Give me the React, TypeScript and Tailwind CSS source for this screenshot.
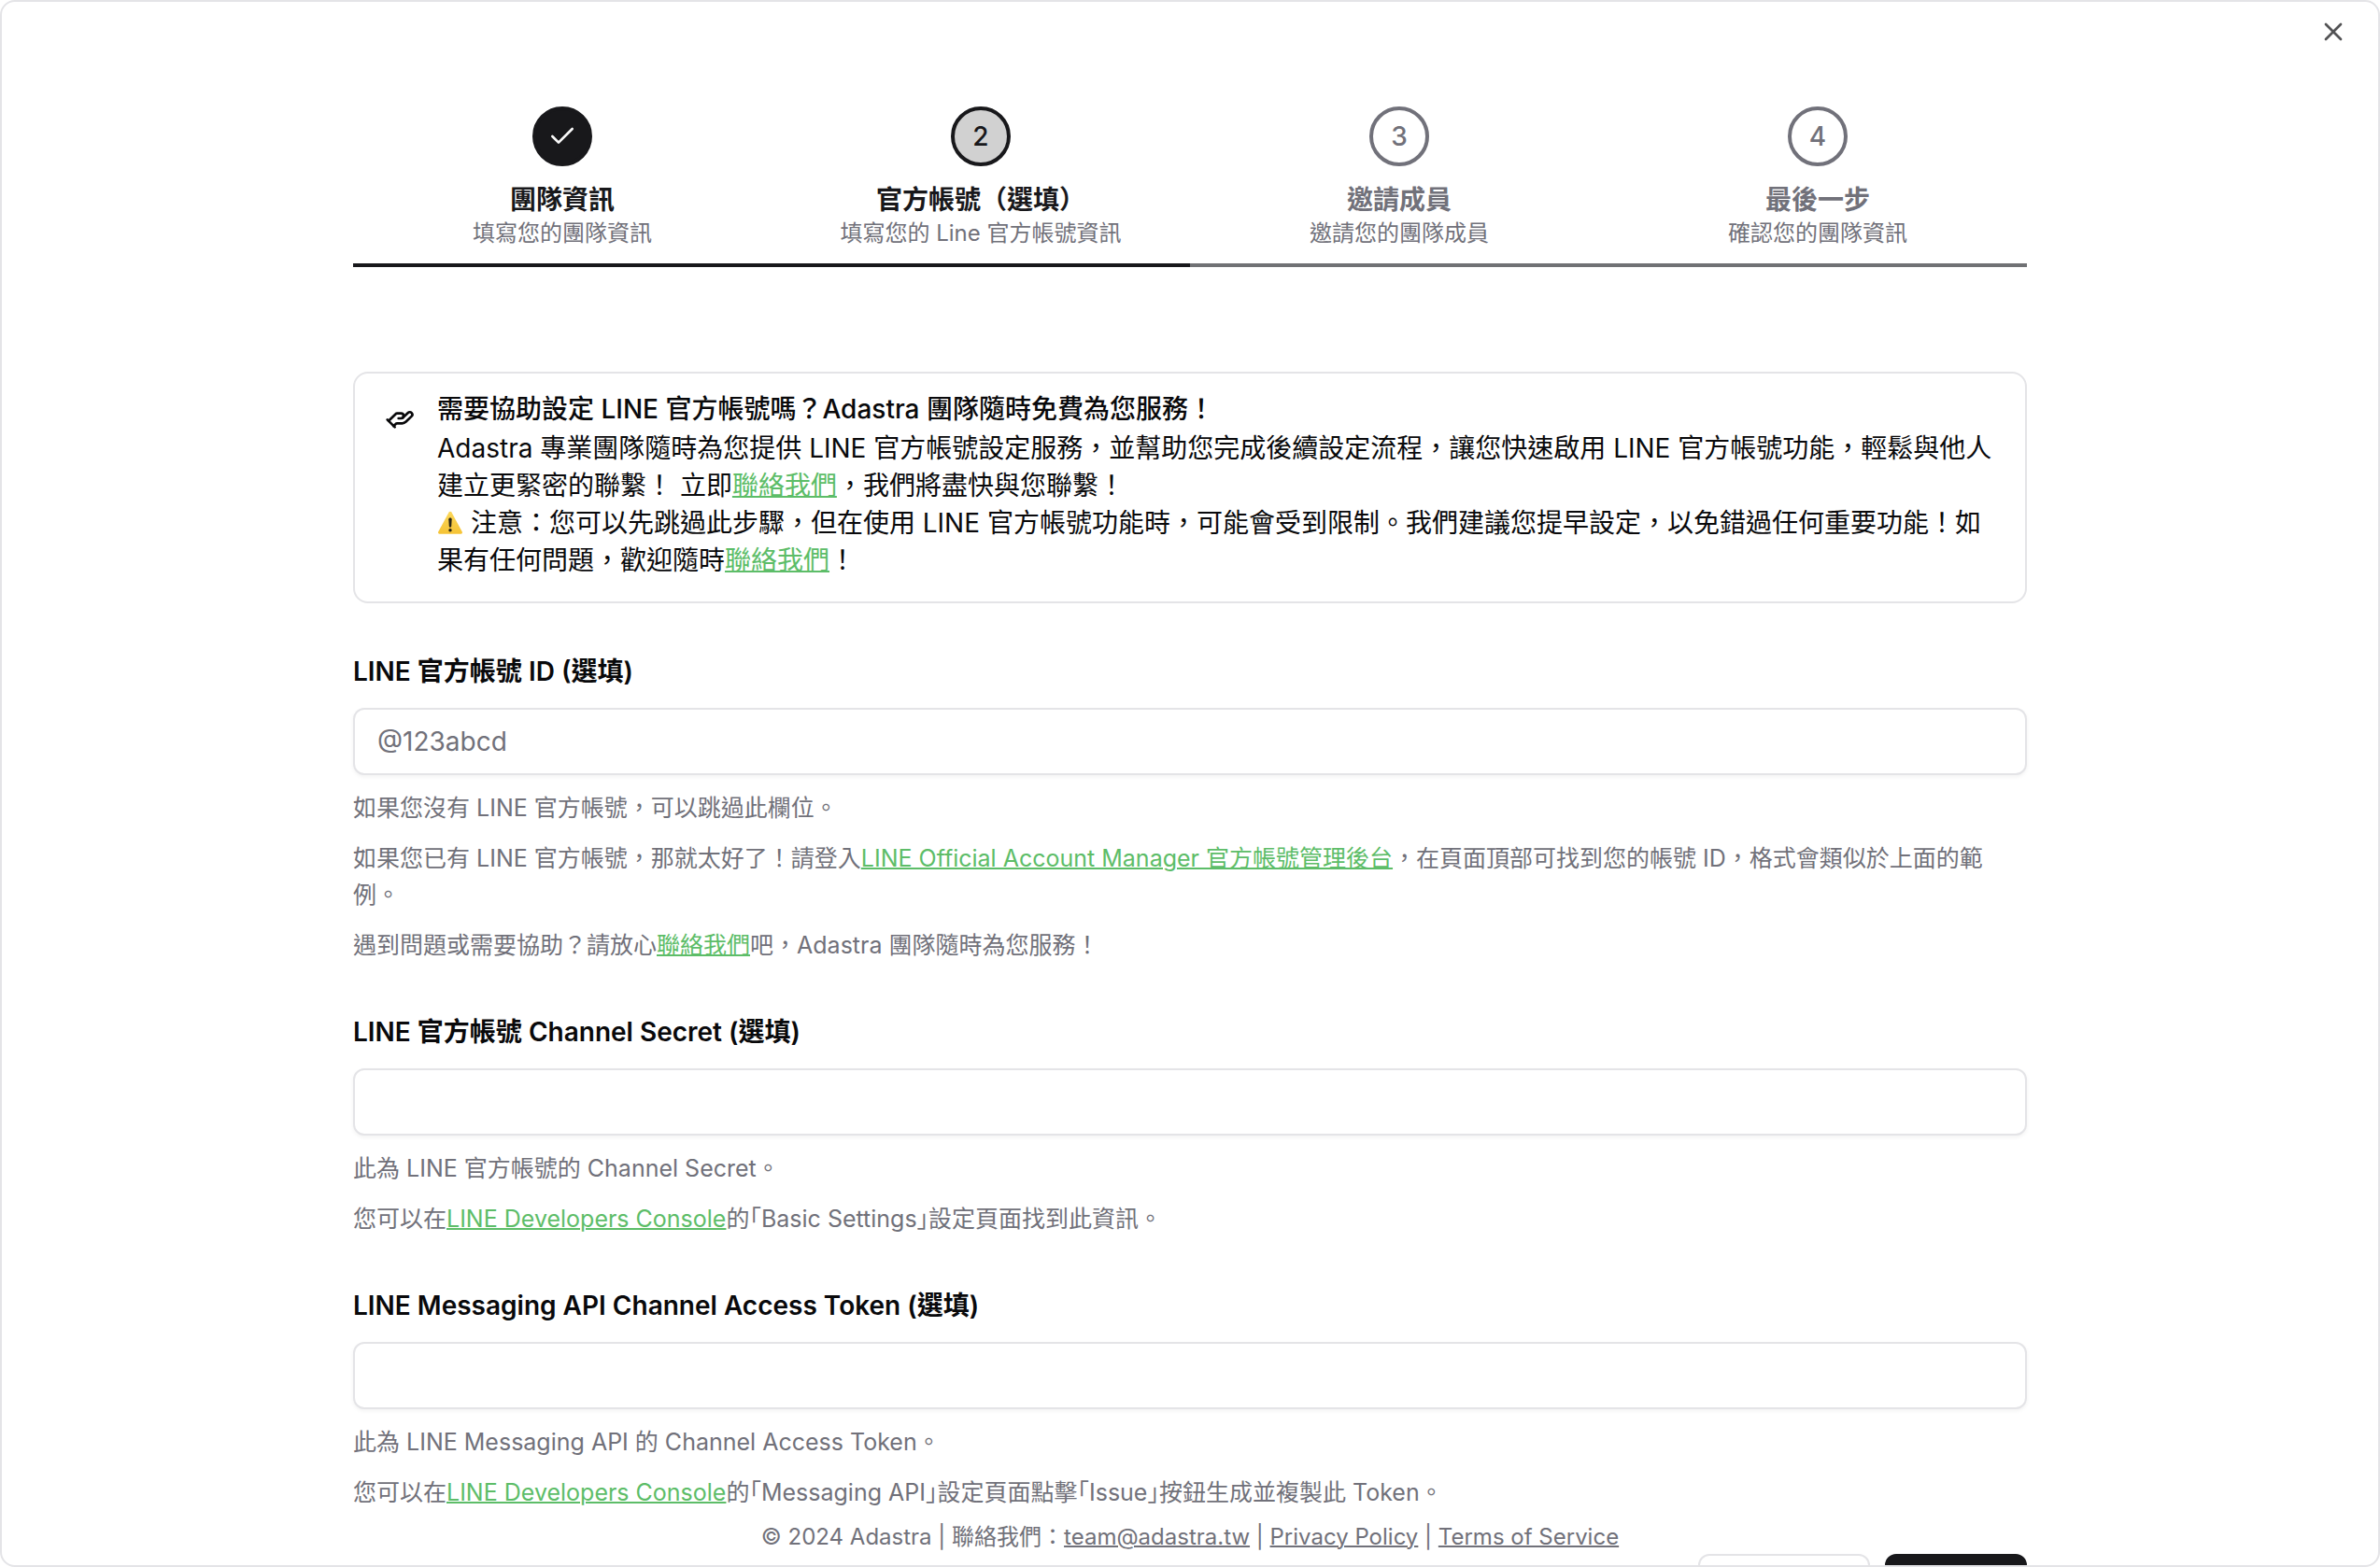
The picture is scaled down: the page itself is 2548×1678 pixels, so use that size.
import type { ReactNode } from "react";
import { Check, HandHelping, X } from "lucide-react";

type StepState = "done" | "current" | "upcoming";

const steps: { title: string; description: string; state: StepState }[] = [
  { title: "團隊資訊", description: "填寫您的團隊資訊", state: "done" },
  { title: "官方帳號（選填）", description: "填寫您的 Line 官方帳號資訊", state: "current" },
  { title: "邀請成員", description: "邀請您的團隊成員", state: "upcoming" },
  { title: "最後一步", description: "確認您的團隊資訊", state: "upcoming" },
];

const circleStyles: Record<StepState, string> = {
  done: "border-[#18181b] bg-[#18181b] text-zinc-50",
  current: "border-[#18181b] bg-[#d1d1d1] text-[#18181b]",
  upcoming: "border-[#71717a] text-[#71717a]",
};

function Step({ index, title, description, state }: { index: number; title: string; description: string; state: StepState }) {
  const upcoming = state === "upcoming";
  return (
    <li
      aria-current={state === "current" ? "step" : undefined}
      className={`flex flex-1 flex-col items-center border-b-4 pb-4 ${upcoming ? "border-[#707174]" : "border-[#18181b]"}`}
    >
      <span className={`flex size-16 items-center justify-center rounded-full border-4 text-[28px] font-medium ${circleStyles[state]}`}>
        {state === "done" ? <Check className="size-8" strokeWidth={2} /> : index}
      </span>
      <span className={`mt-4 text-[28px] leading-10 font-semibold ${upcoming ? "text-[#71717a]" : "text-[#18181b]"}`}>{title}</span>
      <span className="text-2xl leading-8 text-[#71717a]">{description}</span>
    </li>
  );
}

function TextLink({ href, children }: { href: string; children: ReactNode }) {
  return (
    <a href={href} className="text-[#5dbd68] underline decoration-2">
      {children}
    </a>
  );
}

function WarningSign() {
  return (
    <svg viewBox="0 0 28 28" className="inline size-7 align-[-4px]" role="img" aria-label="⚠️">
      <defs>
        <linearGradient id="warn" x1="0" y1="0" x2="0" y2="1">
          <stop offset="0" stopColor="#fbd75b" />
          <stop offset="1" stopColor="#f5c335" />
        </linearGradient>
      </defs>
      <path d="M12.6 2.6a1.6 1.6 0 0 1 2.8 0l11.4 21a1.5 1.5 0 0 1-1.3 2.2h-23a1.5 1.5 0 0 1-1.3-2.2z" fill="url(#warn)" />
      <path d="M12.3 10.2c0-1 .7-1.7 1.7-1.7s1.7.7 1.7 1.7l-.5 7.3c-.1.8-.5 1.2-1.2 1.2s-1.1-.4-1.2-1.2z" fill="#2b2618" />
      <circle cx="14" cy="21.8" r="1.7" fill="#2b2618" />
    </svg>
  );
}

function Field({ id, label, placeholder, children }: { id: string; label: string; placeholder?: string; children: ReactNode }) {
  return (
    <div className="flex flex-col">
      <label htmlFor={id} className="text-[28px] leading-[38px] font-semibold">
        {label}
      </label>
      <input
        id={id}
        type="text"
        placeholder={placeholder}
        className="mt-5 h-18 w-full rounded-xl border-2 border-[#e4e4e7] bg-white px-6 text-[28px] shadow-[0_2px_4px_rgba(0,0,0,0.05)] placeholder:text-[#71717a]"
      />
      <div className="mt-4 flex flex-col gap-[15px] text-[25px] leading-[39px] text-[#71717a]">{children}</div>
    </div>
  );
}

export default function App() {
  return (
    <main
      lang="zh-Hant-TW"
      className="relative h-screen overflow-hidden rounded-2xl border-2 border-[#e4e4e7] bg-white font-['Inter','Noto_Sans_CJK_TC',sans-serif] text-[#09090b]"
    >
      <button type="button" aria-label="關閉" className="absolute top-4 right-8 text-[#535355]">
        <X className="size-8" strokeWidth={2} />
      </button>

      <div className="mx-auto flex max-w-448 flex-col pt-28">
        <ol className="flex">
          {steps.map((step, i) => (
            <Step key={step.title} index={i + 1} {...step} />
          ))}
        </ol>

        <section className="mt-28 flex gap-6 rounded-2xl border-2 border-[#e4e4e7] px-8 py-6">
          <HandHelping className="mt-2 size-8 shrink-0" strokeWidth={2} />
          <div className="text-[28px] leading-10">
            <h5 className="mb-2 leading-7 font-medium">需要協助設定 LINE 官方帳號嗎？Adastra 團隊隨時免費為您服務！</h5>
            <p>
              Adastra 專業團隊隨時為您提供 LINE 官方帳號設定服務，並幫助您完成後續設定流程，讓您快速啟用 LINE 官方帳號功能，輕鬆與他人建立更緊密的聯繫！ 立即
              <TextLink href="#contact">聯絡我們</TextLink>，我們將盡快與您聯繫！
            </p>
            <p>
              <WarningSign /> 注意：您可以先跳過此步驟，但在使用 LINE 官方帳號功能時，可能會受到限制。我們建議您提早設定，以免錯過任何重要功能！如果有任何問題，歡迎隨時
              <TextLink href="#contact">聯絡我們</TextLink>！
            </p>
          </div>
        </section>

        <form className="mt-[54px] flex flex-col gap-[54px]">
          <Field id="line-id" label="LINE 官方帳號 ID (選填)" placeholder="@123abcd">
            <p>如果您沒有 LINE 官方帳號，可以跳過此欄位。</p>
            <p>
              如果您已有 LINE 官方帳號，那就太好了！請登入
              <TextLink href="#manager">LINE Official Account Manager 官方帳號管理後台</TextLink>
              ，在頁面頂部可找到您的帳號 ID，格式會類似於上面的範例。
            </p>
            <p>
              遇到問題或需要協助？請放心<TextLink href="#contact">聯絡我們</TextLink>吧，Adastra 團隊隨時為您服務！
            </p>
          </Field>

          <Field id="channel-secret" label="LINE 官方帳號 Channel Secret (選填)">
            <p>此為 LINE 官方帳號的 Channel Secret。</p>
            <p>
              您可以在<TextLink href="#console">LINE Developers Console</TextLink>的｢Basic Settings｣設定頁面找到此資訊。
            </p>
          </Field>

          <Field id="access-token" label="LINE Messaging API Channel Access Token (選填)">
            <p>此為 LINE Messaging API 的 Channel Access Token。</p>
            <p>
              您可以在<TextLink href="#console">LINE Developers Console</TextLink>
              的｢Messaging API｣設定頁面點擊｢Issue｣按鈕生成並複製此 Token。
            </p>
          </Field>

          <div className="-mt-2 flex justify-end gap-4">
            <button type="button" aria-label="上一步" className="h-18 w-46 rounded-xl border-2 border-[#e4e4e7] bg-white" />
            <button type="submit" aria-label="下一步" className="h-18 w-38 rounded-xl bg-[#18181b]" />
          </div>
        </form>
      </div>

      <footer className="absolute inset-x-0 bottom-3 text-center text-2xl leading-9 text-[#71717a]">
        © 2024 Adastra | 聯絡我們：
        <a href="mailto:team@adastra.tw" className="underline decoration-2">team@adastra.tw</a>
        {" | "}
        <a href="#privacy" className="underline decoration-2">Privacy Policy</a>
        {" | "}
        <a href="#terms" className="underline decoration-2">Terms of Service</a>
      </footer>
    </main>
  );
}
